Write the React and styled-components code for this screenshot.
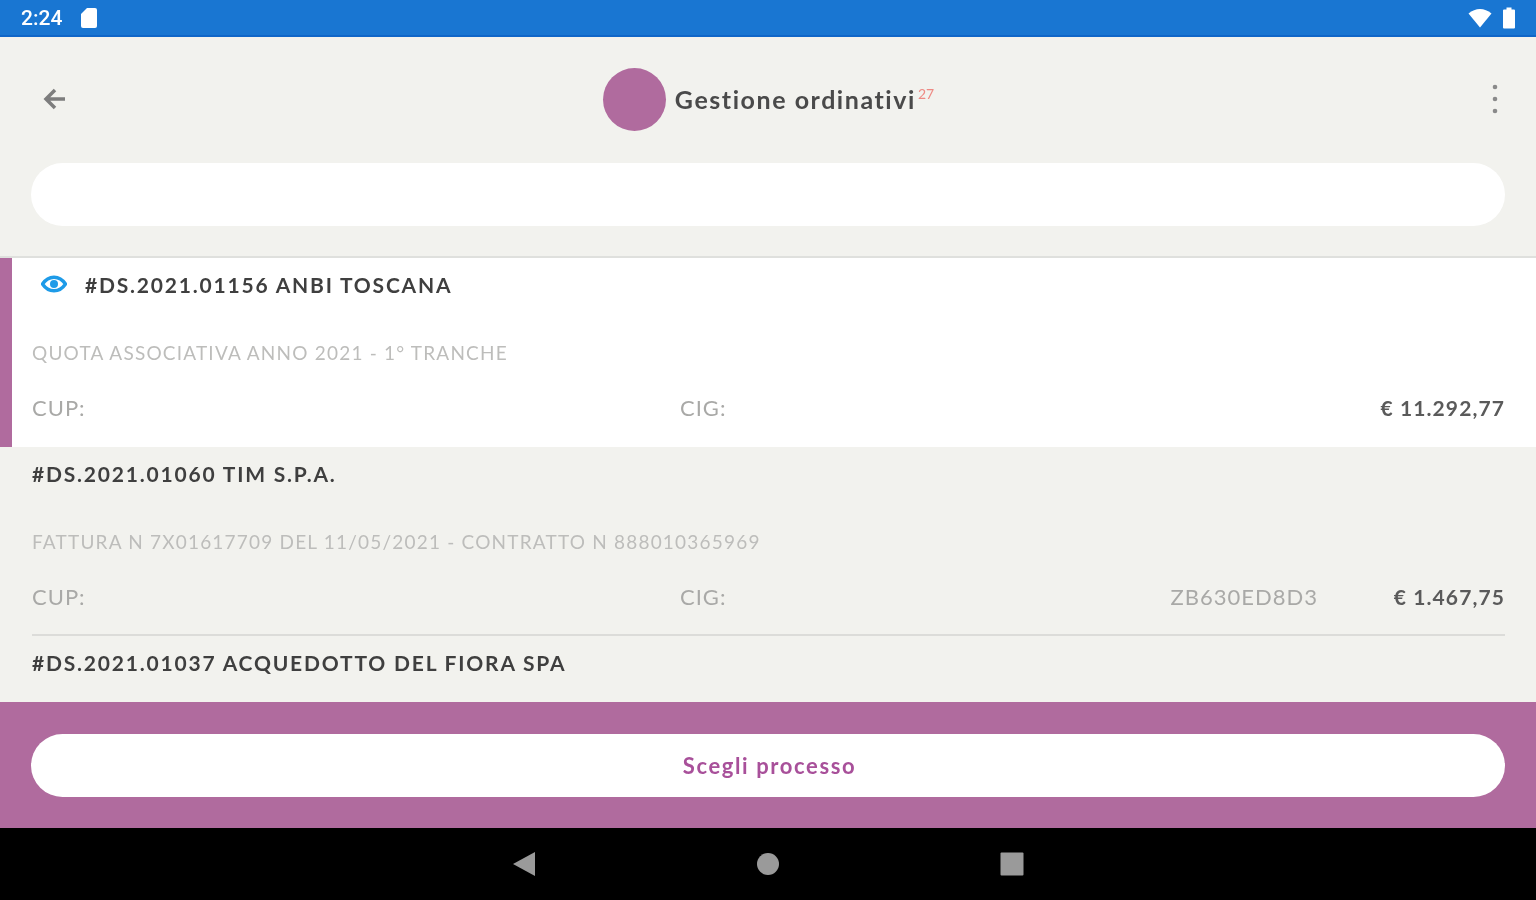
import React from "react";
import styled, { createGlobalStyle } from "styled-components";

const GlobalStyle = createGlobalStyle`
  html, body {
    margin: 0;
    padding: 0;
    background: #f2f2ee;
  }
  * {
    box-sizing: border-box;
  }
`;

const Screen = styled.div`
  width: 1536px;
  height: 900px;
  display: flex;
  flex-direction: column;
  overflow: hidden;
  background: #f2f2ee;
  font-family: "Lato", "Open Sans", sans-serif;
  filter: blur(0.6px);
`;

const StatusBar = styled.div`
  height: 37px;
  flex: none;
  display: flex;
  align-items: center;
  justify-content: space-between;
  padding: 0 20px 0 21px;
  background: #1976d2;
  border-bottom: 2px solid #0f66c8;
  color: #fff;
`;

const StatusGroup = styled.div`
  display: flex;
  align-items: center;
  gap: ${(p) => p.$gap}px;
`;

const Clock = styled.span`
  font-family: "Roboto", sans-serif;
  font-size: 21px;
  font-weight: 500;
`;

const Header = styled.div`
  height: 126px;
  flex: none;
  display: flex;
  align-items: center;
  justify-content: space-between;
  padding: 0 37px 2px 40px;
`;

const HeaderTitle = styled.div`
  display: flex;
  align-items: center;
  gap: 9px;
  margin-right: 24px;
`;

const Avatar = styled.div`
  width: 63px;
  height: 63px;
  border-radius: 50%;
  background: #b06b9e;
`;

const TitleText = styled.h1`
  margin: 0;
  font-size: 25px;
  font-weight: 700;
  letter-spacing: 1.55px;
  color: #4a4a4a;
`;

const Count = styled.sup`
  font-size: 14px;
  font-weight: 400;
  letter-spacing: 0;
  color: #ee8a84;
  margin-left: 2px;
  position: relative;
  top: -1px;
  vertical-align: super;
  line-height: 0;
`;

const SearchWrap = styled.div`
  flex: none;
  padding: 0 31px 30px;
  border-bottom: 2px solid #dfe0dd;
`;

const Pill = styled.div`
  height: 63px;
  border-radius: 32px;
  background: #fff;
  display: flex;
  align-items: center;
  justify-content: center;
`;

const List = styled.div`
  flex: 1;
  min-height: 0;
  overflow: hidden;
`;

const Row = styled.div`
  height: 189px;
  padding: 0 31px 0 ${(p) => (p.$active ? 20 : 32)}px;
  background: ${(p) => (p.$active ? "#fff" : "transparent")};
  border-left: ${(p) => (p.$active ? "12px solid #b06b9e" : "none")};
`;

const RowInner = styled.div`
  height: 100%;
  display: flex;
  flex-direction: column;
  border-bottom: ${(p) => (p.$line ? "2px solid #dcdcd9" : "none")};
`;

const RowTitle = styled.div`
  height: 52px;
  display: flex;
  align-items: center;
  gap: 18px;
  font-size: 21px;
  font-weight: 700;
  letter-spacing: 1.8px;
  color: #3f3f3f;
  padding-left: ${(p) => (p.$active ? 9 : 0)}px;
`;

const Description = styled.div`
  margin-top: 29px;
  height: 28px;
  line-height: 28px;
  font-size: 19px;
  letter-spacing: 1.2px;
  color: #bdbdbb;
`;

const Meta = styled.div`
  margin-top: 26px;
  display: grid;
  grid-template-columns: 648px 1fr 187px;
  align-items: center;
  height: 28px;
  font-size: 22px;
  letter-spacing: 1px;
  color: #a9a9a7;
`;

const CigCell = styled.div`
  display: flex;
  justify-content: space-between;
`;

const Amount = styled.div`
  text-align: right;
  font-size: 21px;
  font-weight: 700;
  letter-spacing: 1.1px;
  color: #5a5a5a;
`;

const Footer = styled.div`
  height: 126px;
  flex: none;
  padding: 32px 31px 0;
  background: #b06b9e;
`;

const FooterLabel = styled.span`
  font-size: 22px;
  font-weight: 700;
  letter-spacing: 1.6px;
  margin-left: 3px;
  color: #a8509a;
`;

const NavBar = styled.div`
  height: 72px;
  flex: none;
  background: #000;
  display: flex;
  align-items: center;
  justify-content: center;
  gap: 220px;
`;

const rows = [
  {
    id: "#DS.2021.01156 ANBI TOSCANA",
    text: "QUOTA ASSOCIATIVA ANNO 2021 - 1° TRANCHE",
    cig: "",
    amount: "€ 11.292,77",
    active: true,
  },
  {
    id: "#DS.2021.01060 TIM S.P.A.",
    text: "FATTURA N 7X01617709 DEL 11/05/2021 - CONTRATTO N 888010365969",
    cig: "ZB630ED8D3",
    amount: "€ 1.467,75",
    line: true,
  },
  // only the title of this one is visible above the footer
  { id: "#DS.2021.01037 ACQUEDOTTO DEL FIORA SPA" },
];

const SdIcon = () => (
  <svg width="18" height="22" viewBox="0 0 18 22" fill="#fff">
    <path d="M7 1h8a2 2 0 0 1 2 2v16a2 2 0 0 1-2 2H3a2 2 0 0 1-2-2V7z" />
  </svg>
);

const WifiIcon = () => (
  <svg width="24" height="20" viewBox="0 0 24 20" fill="#fff">
    <path d="M12 19.5 0.5 5.5C4 2.5 8 1 12 1s8 1.500 11.500 4.500z" />
  </svg>
);

const BatteryIcon = () => (
  <svg width="14" height="22" viewBox="0 0 14 22" fill="#fff">
    <path d="M4.500 0.500h5v2h2.500a1 1 0 0 1 1 1v17a1 1 0 0 1-1 1H2a1 1 0 0 1-1-1v-17a1 1 0 0 1 1-1h2.500z" />
  </svg>
);

const BackIcon = () => (
  <svg width="30" height="30" viewBox="0 0 30 30" fill="none" stroke="#7d7d7d" strokeWidth="3.500">
    <path d="M25 15H7M15 6l-9 9 9 9" />
  </svg>
);

const MoreIcon = () => (
  <svg width="8" height="34" viewBox="0 0 8 34" fill="#8a8a8a">
    <circle cx="4" cy="5" r="2.300" />
    <circle cx="4" cy="17" r="2.300" />
    <circle cx="4" cy="29" r="2.300" />
  </svg>
);

const EyeIcon = () => (
  <svg width="26" height="18" viewBox="0 0 26 18" fill="none">
    <path d="M1.500 9C4.500 4.500 8.500 2.200 13 2.200S21.500 4.500 24.500 9c-3 4.500-7 6.800-11.500 6.800S4.500 13.500 1.500 9z" stroke="#1e9be8" strokeWidth="3.400" />
    <circle cx="13" cy="9" r="4" fill="#1e9be8" />
  </svg>
);

const NavBack = () => (
  <svg width="24" height="26" viewBox="0 0 24 26" fill="#9a9a9a">
    <path d="M23 1v24L1 13z" />
  </svg>
);

const NavHome = () => (
  <svg width="24" height="24" viewBox="0 0 24 24" fill="#9a9a9a">
    <circle cx="12" cy="12" r="11" />
  </svg>
);

const NavRecent = () => (
  <svg width="24" height="24" viewBox="0 0 24 24" fill="#9a9a9a">
    <rect x="0.500" y="0.500" width="23" height="23" rx="1" />
  </svg>
);

export default function App() {
  return (
    <Screen>
      <GlobalStyle />
      <StatusBar>
        <StatusGroup $gap={18}>
          <Clock>2:24</Clock>
          <SdIcon />
        </StatusGroup>
        <StatusGroup $gap={10}>
          <WifiIcon />
          <BatteryIcon />
        </StatusGroup>
      </StatusBar>

      <Header>
        <BackIcon />
        <HeaderTitle>
          <Avatar />
          <TitleText>
            Gestione ordinativi<Count>27</Count>
          </TitleText>
        </HeaderTitle>
        <MoreIcon />
      </Header>

      <SearchWrap>
        <Pill />
      </SearchWrap>

      <List>
        {rows.map((row) => (
          <Row key={row.id} $active={row.active}>
            <RowInner $line={row.line}>
              <RowTitle $active={row.active}>
                {row.active && <EyeIcon />}
                {row.id}
              </RowTitle>
              {row.text && (
                <>
                  <Description>{row.text}</Description>
                  <Meta>
                    <span>CUP:</span>
                    <CigCell>
                      <span>CIG:</span>
                      <span>{row.cig}</span>
                    </CigCell>
                    <Amount>{row.amount}</Amount>
                  </Meta>
                </>
              )}
            </RowInner>
          </Row>
        ))}
      </List>

      <Footer>
        <Pill>
          <FooterLabel>Scegli processo</FooterLabel>
        </Pill>
      </Footer>

      <NavBar>
        <NavBack />
        <NavHome />
        <NavRecent />
      </NavBar>
    </Screen>
  );
}
